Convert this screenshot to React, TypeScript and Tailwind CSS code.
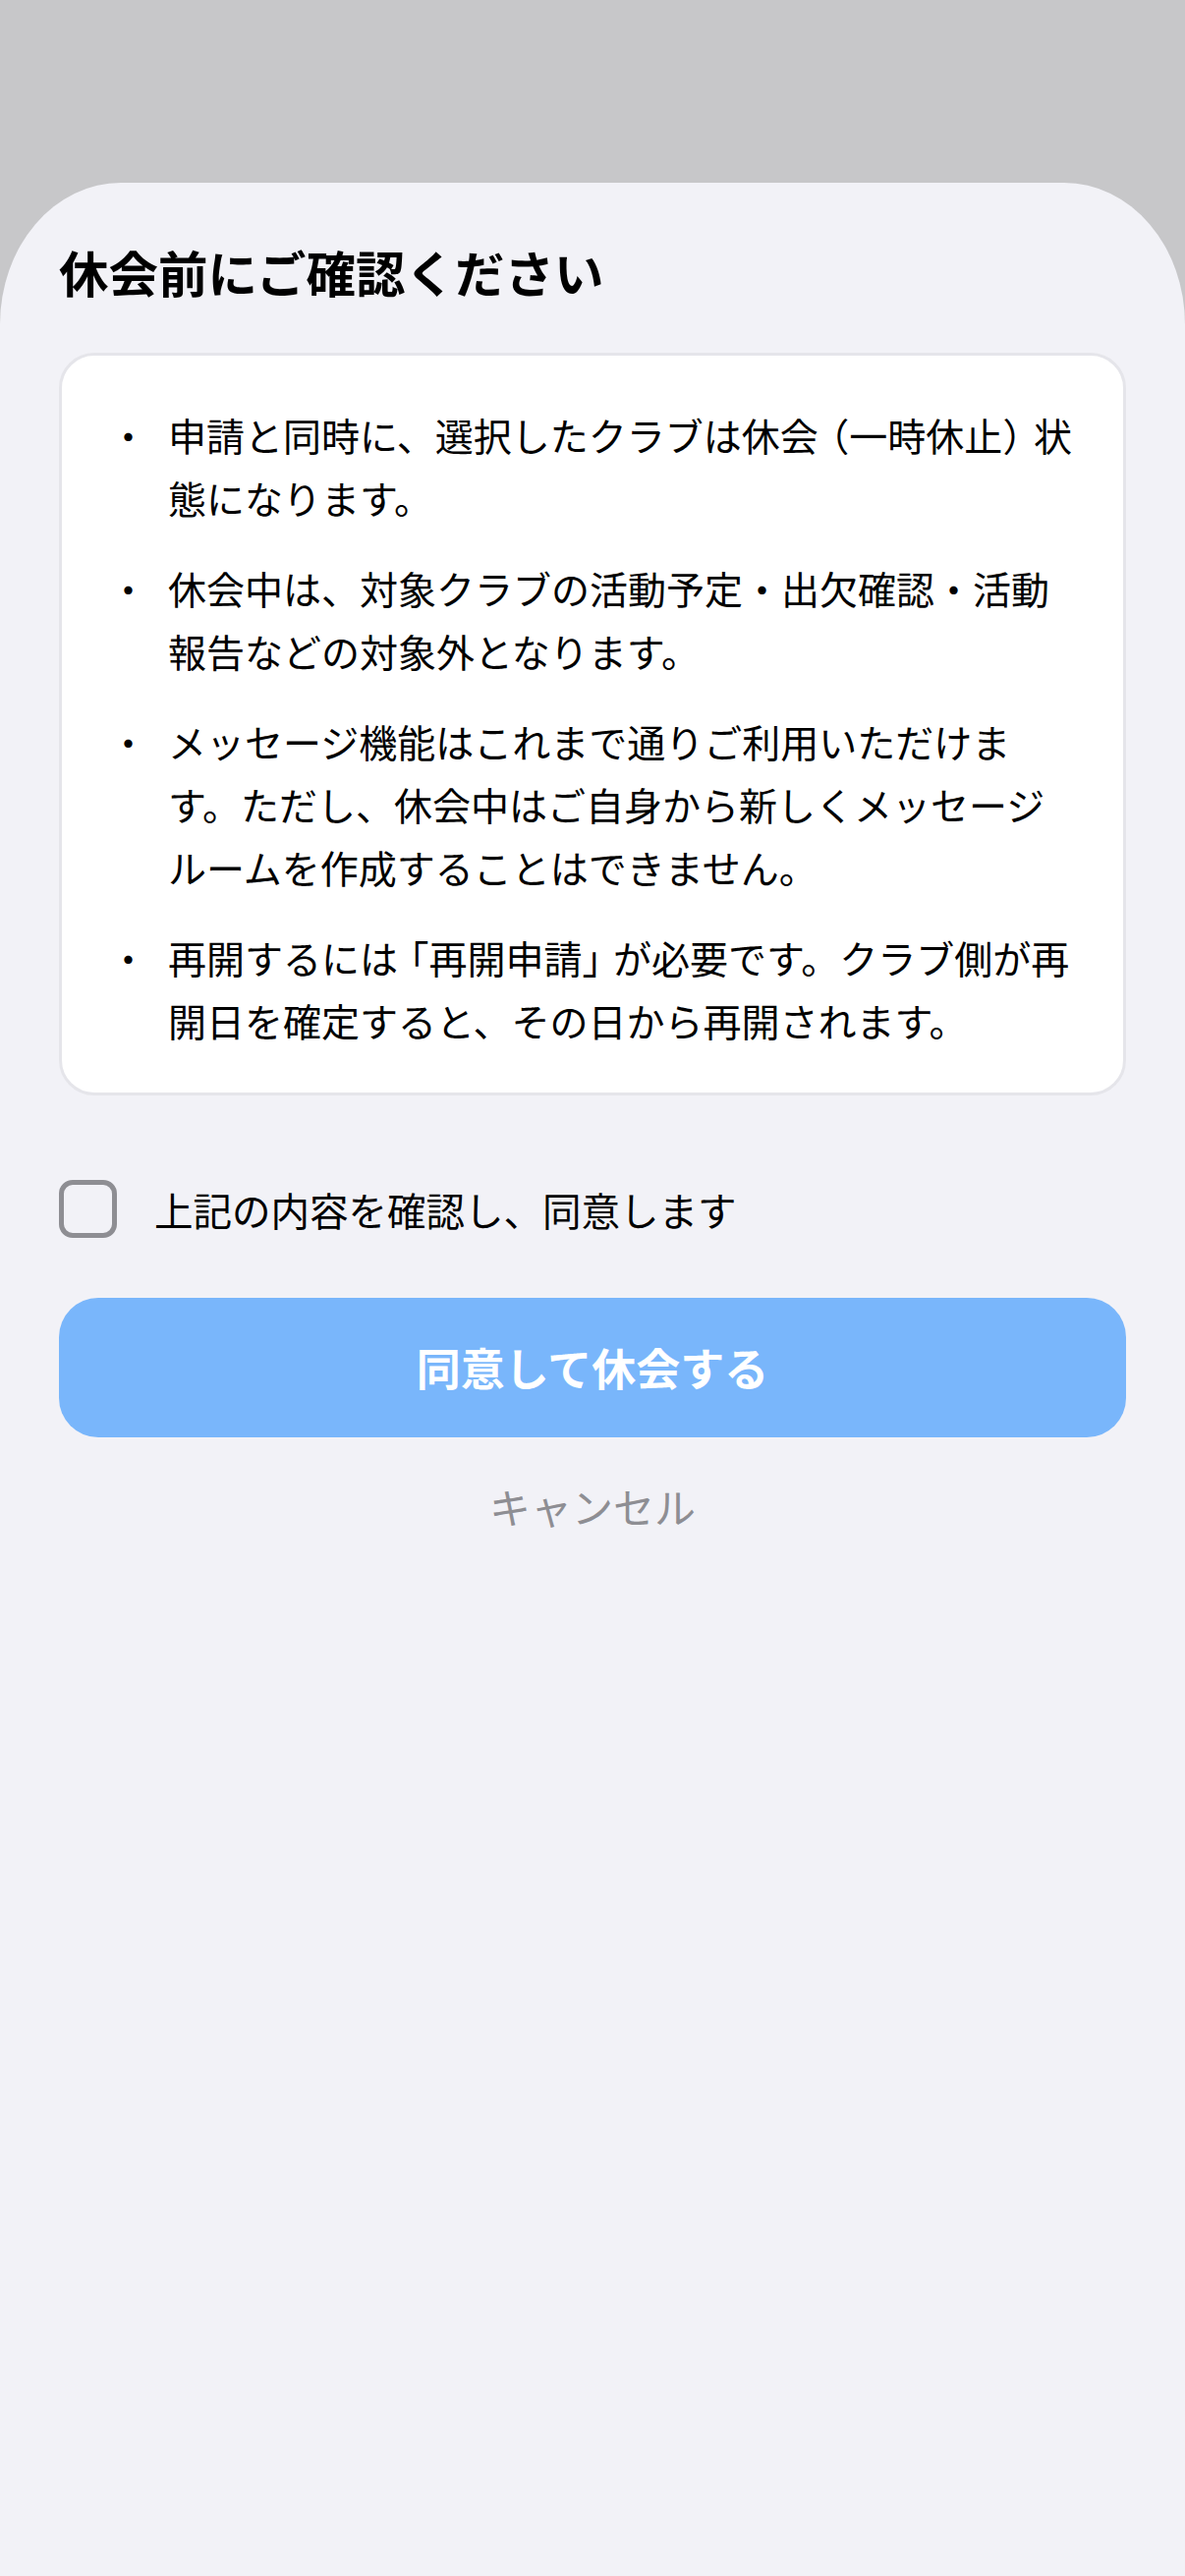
import { useState, type ReactNode } from 'react';

// iOS packs brackets tighter than Noto does: half-width bracket + a bit of air
const Open = ({ c }: { c: string }) => <span className="pl-[12px] [font-feature-settings:'halt']">{c}</span>;
const Close = ({ c }: { c: string }) => <span className="pr-[12px] [font-feature-settings:'halt']">{c}</span>;

const notes: ReactNode[][] = [
  [
    <>
      申請と同時に、選択したクラブは休会<Open c="（" />一時休止<Close c="）" />状
    </>,
    '態になります。',
  ],
  ['休会中は、対象クラブの活動予定・出欠確認・活動', '報告などの対象外となります。'],
  [
    'メッセージ機能はこれまで通りご利用いただけま',
    'す。ただし、休会中はご自身から新しくメッセージ',
    'ルームを作成することはできません。',
  ],
  [
    <>
      再開するには<Open c="「" />再開申請<Close c="」" />が必要です。クラブ側が再
    </>,
    '開日を確定すると、その日から再開されます。',
  ],
];

export default function App() {
  const [agreed, setAgreed] = useState(false);

  return (
    <div
      className="min-h-[2622px] flex flex-col bg-[#c7c7c9] pt-[186px]"
      style={{ fontFamily: '"Noto Sans CJK JP", "Noto Sans", sans-serif' }}
    >
      <div className="flex-1 bg-[#f2f2f7] rounded-tl-[123px_144px] rounded-tr-[123px_144px] px-[60px] pt-[60px]">
        <h1 className="text-[50.5px] leading-[60px] font-bold text-black">休会前にご確認ください</h1>

        {/* Notes card */}
        <div className="mt-[53px] bg-white border-[3px] border-[#e5e5ea] rounded-[36px] pl-[48px] pr-[30px] pt-[48px] pb-[42px]">
          <ul className="flex flex-col gap-[28px]">
            {notes.map((lines, i) => (
              <li key={i} className="flex text-[39px] leading-[64px] text-black">
                <span className="w-[39px] shrink-0 text-center mr-[21px]">・</span>
                <div>
                  {lines.map((line, j) => (
                    <div key={j} className="whitespace-nowrap">
                      {line}
                    </div>
                  ))}
                </div>
              </li>
            ))}
          </ul>
        </div>

        {/* Agreement */}
        <label className="mt-[86px] flex items-center gap-[38px] cursor-pointer">
          <button
            type="button"
            onClick={() => setAgreed(!agreed)}
            className={`w-[59px] h-[59px] rounded-[14px] border-[5px] shrink-0 ${
              agreed ? 'bg-[#007aff] border-[#007aff]' : 'border-[#8e8e93] bg-transparent'
            }`}
            aria-label="同意"
          />
          <span className="text-[39.5px] leading-[59px] text-black">上記の内容を確認し、同意します</span>
        </label>

        <button
          type="button"
          disabled={!agreed}
          className={`mt-[61px] w-full h-[142px] rounded-[40px] text-white text-[45px] font-bold ${
            agreed ? 'bg-[#007aff]' : 'bg-[#79b6fb]'
          }`}
        >
          同意して休会する
        </button>

        <div className="mt-[40px] text-center">
          <button type="button" className="text-[42px] leading-[60px] text-[#8e8e93]">
            キャンセル
          </button>
        </div>
      </div>
    </div>
  );
}
